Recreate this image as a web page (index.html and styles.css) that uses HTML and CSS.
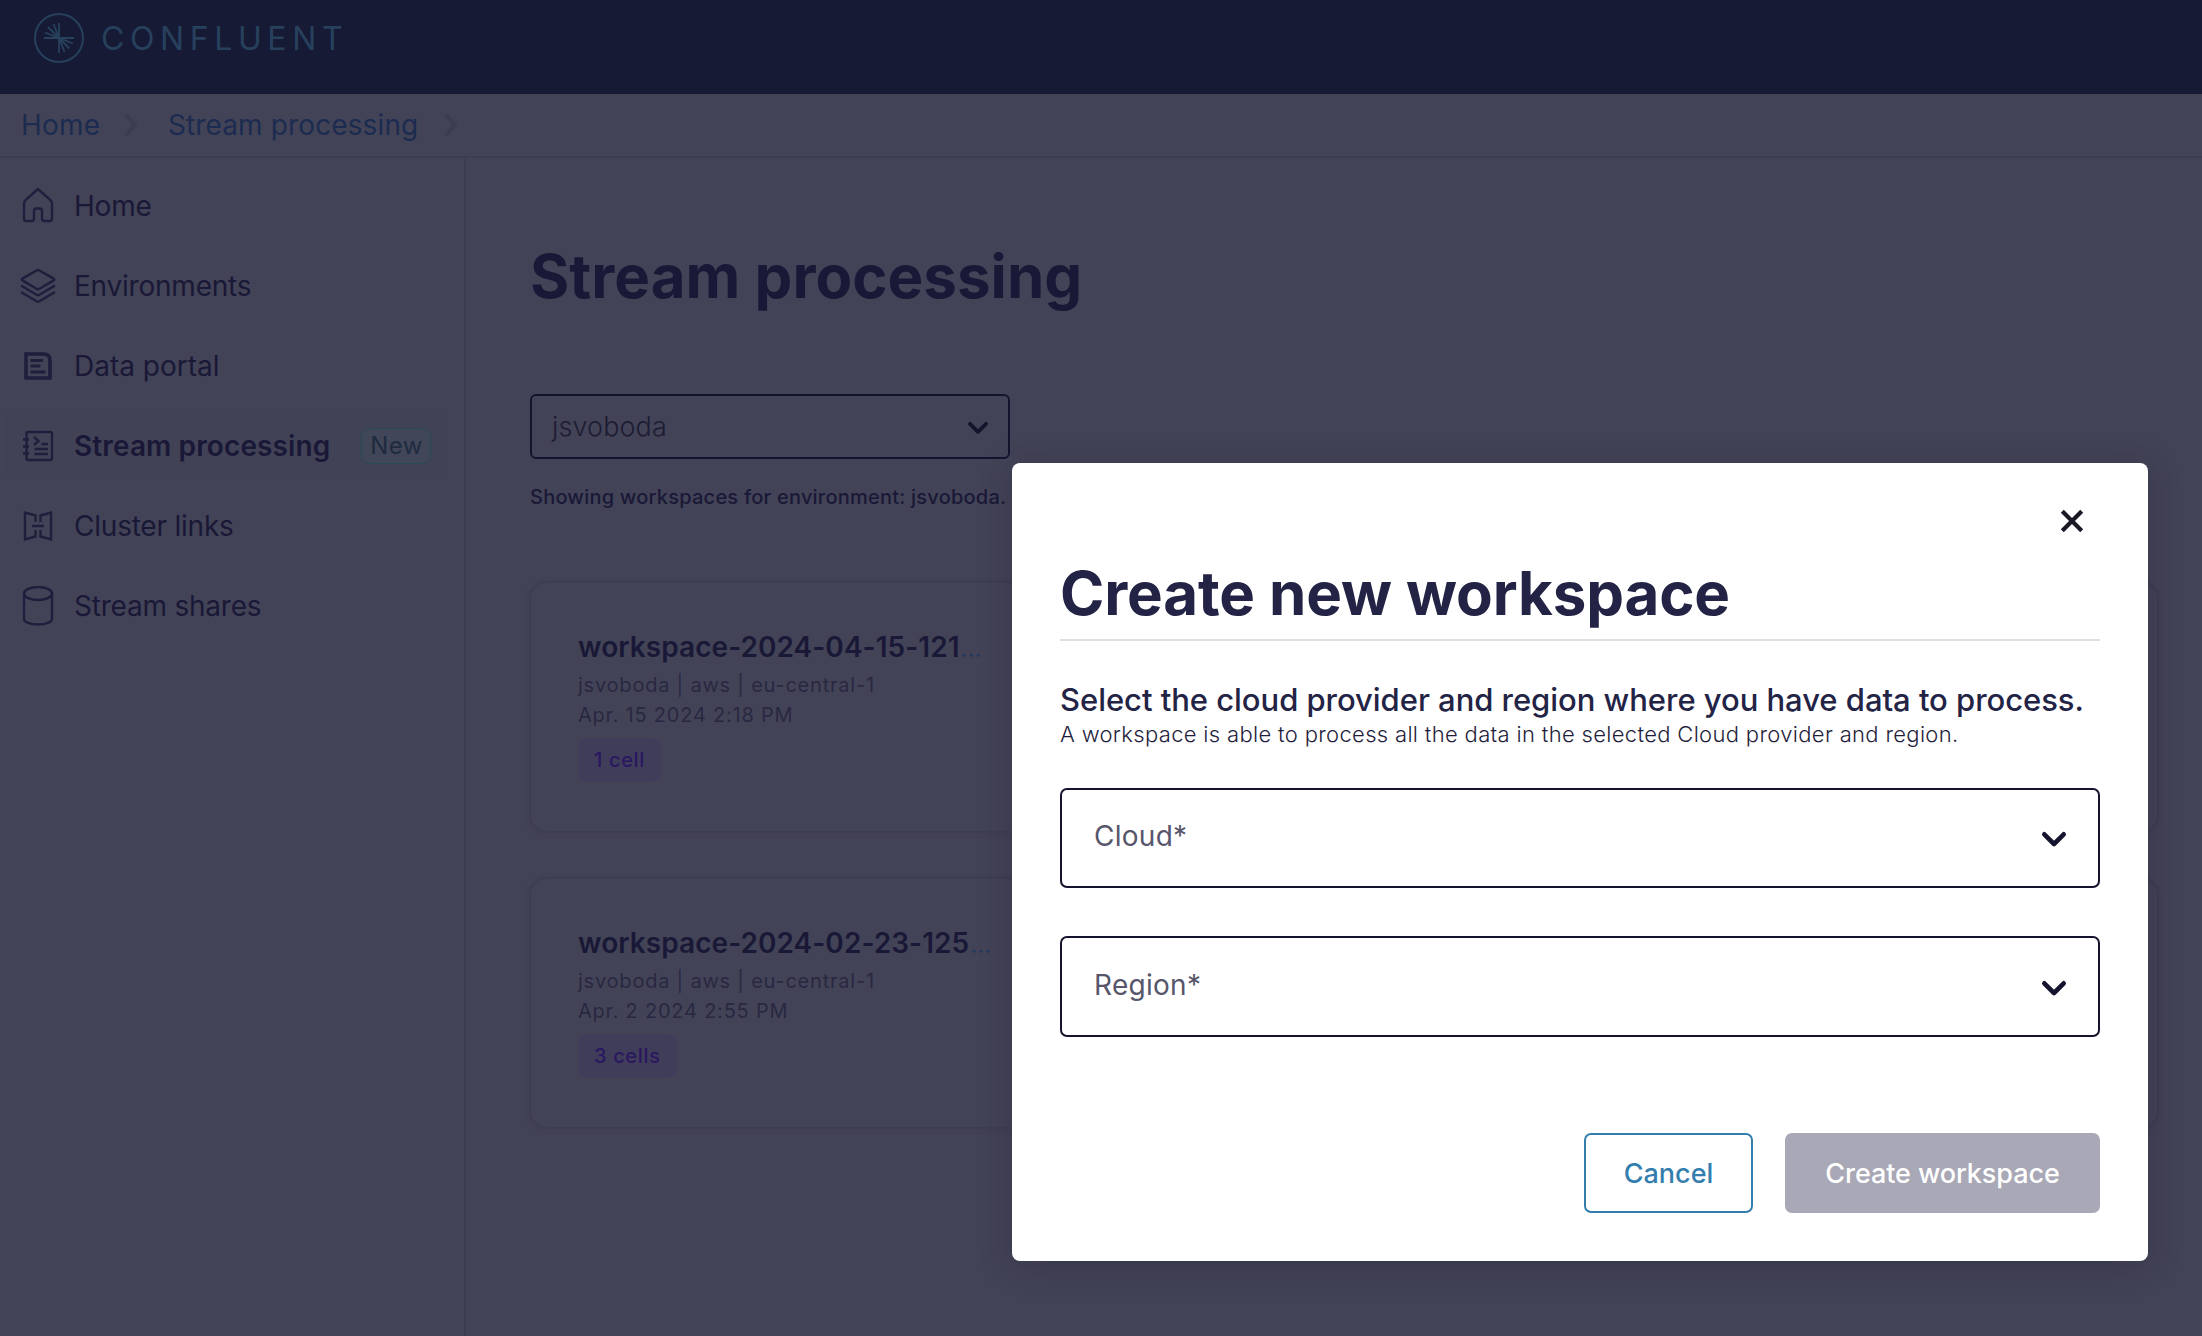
FILE: index.html
```html
<!DOCTYPE html>
<html lang="en">
<head>
<meta charset="utf-8">
<title>Stream processing</title>
<link rel="stylesheet" href="styles.css">
</head>
<body>
<header class="topbar">
  <svg class="logo" width="52" height="52" viewBox="0 0 52 52" fill="none" stroke="currentColor">
    <circle cx="26" cy="26" r="24" stroke-width="2"/>
    <path stroke-width="1.8" d="M26 11v30M11 26h30M26 26 20.5 12M26 26 15 15M26 26 12 20.5M26 26l5.5 14M26 26l10.500 10.500M26 26l14 5.500"/>
  </svg>
  <span class="wordmark">CONFLUENT</span>
</header>

<nav class="crumbs">
  <a class="crumb">Home</a>
  <svg class="crumb-sep" width="14" height="24" viewBox="0 0 14 24"><path d="M2 2l9 10-9 10"/></svg>
  <a class="crumb crumb-wide">Stream processing</a>
  <svg class="crumb-sep" width="14" height="24" viewBox="0 0 14 24"><path d="M2 2l9 10-9 10"/></svg>
</nav>

<div class="layout">
  <aside class="sidebar">
    <a class="nav-item home">
      <svg class="nav-icon" viewBox="0 0 36 40"><path d="M18 3 6 13.700q-2 1.800-2 4V32.500q0 2.500 2.500 2.500h5q2.500 0 2.500-2.500V25q0-2.500 2.500-2.500h3q2.500 0 2.500 2.500v7.500q0 2.500 2.500 2.500h5q2.500 0 2.500-2.500V17.700q0-2.200-2-4z"/></svg>
      <span>Home</span>
    </a>
    <a class="nav-item tight">
      <svg class="nav-icon" viewBox="0 0 36 40"><path d="M17 4.300 2.300 12.600q-1.200.9 0 1.800L17 23q1 .5 2 0l14.700-8.600q1.200-.9 0-1.800L19 4.300q-1-.5-2 0zM1 19.500 17 29q1 .5 2 0l16-9.500M1 26 17 35.500q1 .5 2 0L35 26"/></svg>
      <span>Environments</span>
    </a>
    <a class="nav-item">
      <svg class="nav-icon" viewBox="0 0 36 40"><path stroke-width="3.600" d="M6 8h17.500q6.500 0 6.500 6.500V32H6z"/><path stroke-width="2.800" d="M10.500 14.500h12.500M10.500 20h10M10.500 26h15"/></svg>
      <span>Data portal</span>
    </a>
    <a class="nav-item active">
      <svg class="nav-icon" viewBox="0 0 36 40"><rect x="6.500" y="6" width="25.500" height="28" rx="1.500"/><path d="M3 13.500h6M3 20.500h6M3 27.500h6M14 11l4.500 4-4.500 4M21.500 18H28M14.500 23H28M14.500 28H28"/></svg>
      <span>Stream processing</span>
      <em class="badge">New</em>
    </a>
    <a class="nav-item tight">
      <svg class="nav-icon" viewBox="0 0 36 40"><path d="M15.500 16V9.500L5 6.500v27l10.500-3V24M20.500 16V9.500L31 6.500v27l-10.500-3V24M12 20h12"/></svg>
      <span>Cluster links</span>
    </a>
    <a class="nav-item tight">
      <svg class="nav-icon" viewBox="0 0 36 40"><ellipse cx="18" cy="7.500" rx="14" ry="6.500"/><path d="M4 7.500V33c0 3 6 5.500 14 5.500S32 36 32 33V7.500"/></svg>
      <span>Stream shares</span>
    </a>
  </aside>

  <main class="content">
    <h1 class="page-title">Stream processing</h1>
    <div class="env-select">
      <span>jsvoboda</span>
      <svg width="22" height="14" viewBox="0 0 22 14"><path d="M3 2.800l8 8 8-8"/></svg>
    </div>
    <p class="caption">Showing workspaces for environment: jsvoboda.</p>
    <div class="cards">
      <article class="card">
        <h2 class="card-title">workspace-2024-04-15-121<span class="dots">...</span></h2>
        <p class="meta">jsvoboda | aws | eu-central-1</p>
        <p class="meta">Apr. 15 2024 2:18 PM</p>
        <span class="chip">1 cell</span>
      </article>
      <article class="card"></article>
      <article class="card"></article>
      <article class="card">
        <h2 class="card-title">workspace-2024-02-23-125<span class="dots">...</span></h2>
        <p class="meta">jsvoboda | aws | eu-central-1</p>
        <p class="meta">Apr. 2 2024 2:55 PM</p>
        <span class="chip">3 cells</span>
      </article>
      <article class="card"></article>
      <article class="card"></article>
    </div>
  </main>
</div>

<section class="modal">
  <div class="modal-top">
    <svg width="24" height="24" viewBox="0 0 24 24"><path d="M2.300 2.300l19.400 19.400M21.700 2.300L2.300 21.700"/></svg>
  </div>
  <h2 class="modal-title">Create new workspace</h2>
  <p class="lead">Select the cloud provider and region where you have data to process.</p>
  <p class="hint">A workspace is able to process all the data in the selected Cloud provider and region.</p>
  <div class="field">
    <span>Cloud*</span>
    <svg width="26" height="17" viewBox="0 0 26 17"><path d="M3.300 3.300l9.700 9.700 9.700-9.700"/></svg>
  </div>
  <div class="field field-region">
    <span>Region*</span>
    <svg width="26" height="17" viewBox="0 0 26 17"><path d="M3.300 3.300l9.700 9.700 9.700-9.700"/></svg>
  </div>
  <div class="actions">
    <button class="btn btn-cancel">Cancel</button>
    <button class="btn btn-create">Create workspace</button>
  </div>
</section>
</body>
</html>
```
FILE: styles.css
```css
* { box-sizing: border-box; margin: 0; padding: 0; }

body {
  width: 2202px;
  height: 1336px;
  overflow: hidden;
  position: relative;
  background: #434357;
  color: #191836;
  font-family: Inter, "Liberation Sans", sans-serif;
  font-size: 28px;
  line-height: 34px;
}

svg { flex: none; fill: none; }

.topbar {
  height: 94px;
  padding: 12px 0 0 33px;
  display: flex;
  align-items: flex-start;
  gap: 16px;
  background: #161a35;
  color: #27405c;
}
.wordmark {
  font-size: 32px;
  font-weight: 400;
  line-height: 53px;
  letter-spacing: 5.6px;
}

.crumbs {
  height: 64px;
  padding: 0 21px;
  display: flex;
  align-items: center;
  border-bottom: 2px solid #3d3d52;
  color: #1c2b50;
}
.crumb { width: 103px; letter-spacing: 0.2px; }
.crumb-wide { width: 276px; letter-spacing: 0.12px; }
.crumb-sep { stroke: #3b3b52; stroke-width: 4; }
.crumb + .crumb-sep { margin-right: 30px; }

.layout { display: flex; height: 1178px; }

.sidebar {
  width: 466px;
  padding: 16px 16px 0 3px;
  border-right: 2px solid #3d3d52;
  display: flex;
  flex-direction: column;
  gap: 16px;
}
.nav-item {
  height: 64px;
  padding-left: 17px;
  display: flex;
  align-items: center;
  gap: 18px;
  border-radius: 6px;
}
.home { letter-spacing: -0.2px; }
.tight { letter-spacing: -0.22px; }
.nav-icon { width: 36px; height: 40px; stroke: #1f1e3c; stroke-width: 2.4; }
.active { background: #424256; font-weight: 600; letter-spacing: 0.12px; }
.badge {
  width: 70px;
  height: 36px;
  margin-left: 13px;
  border: 1px solid #264c57;
  border-radius: 8px;
  background: #414658;
  color: #1e2b40;
  font-size: 24px;
  font-style: normal;
  font-weight: 400;
  letter-spacing: 0.4px;
  line-height: 33px;
  text-align: center;
}

.content { padding: 82px 0 0 64px; width: 1736px; }
.page-title { font-size: 60px; font-weight: 700; line-height: 73px; letter-spacing: 0.03px; }
.env-select {
  width: 480px;
  height: 65px;
  margin-top: 81px;
  padding: 0 19px 0 20px;
  display: flex;
  align-items: center;
  justify-content: space-between;
  border: 2px solid #15142f;
  border-radius: 6px;
  font-size: 27px;
  font-weight: 300;
  letter-spacing: 0.1px;
  color: #1d1c33;
}
.env-select svg { margin-top: 2px; stroke: #15142f; stroke-width: 3.8; stroke-linecap: round; stroke-linejoin: round; }
.caption { margin-top: 26px; font-size: 20px; font-weight: 500; line-height: 24px; letter-spacing: 0.22px; }

.cards {
  width: 1630px;
  margin-top: 72px;
  margin-left: -1px;
  display: grid;
  grid-template-columns: repeat(3, 1fr);
  grid-auto-rows: 252px;
  gap: 44px;
}
.card {
  padding: 46px 0 0 47px;
  border: 2px solid #3e3e52;
  border-radius: 18px;
  box-shadow: 0 2px 6px rgba(32, 30, 60, 0.08);
}
.card-title { font-size: 28px; font-weight: 600; line-height: 36px; letter-spacing: 0.05px; white-space: nowrap; }
.dots { margin-left: 1px; font-size: 25px; font-weight: 400; letter-spacing: -0.3px; color: #263b5c; }
.meta { font-size: 20px; line-height: 30px; color: #292842; letter-spacing: 0.78px; white-space: nowrap; }
.card-title + .meta { margin-top: 4px; }
.chip {
  display: inline-block;
  height: 44px;
  margin-top: 8px;
  padding: 0 16px;
  border-radius: 8px;
  background: #403d5a;
  color: #2a1760;
  font-size: 20px;
  font-weight: 500;
  line-height: 44px;
  letter-spacing: 0.65px;
}

.modal {
  position: absolute;
  left: 1012px;
  top: 463px;
  width: 1136px;
  height: 798px;
  padding: 46px 48px 48px;
  border-radius: 8px;
  background: #fff;
  color: #232345;
  box-shadow: 0 4px 32px rgba(30, 28, 50, 0.32);
}
.modal-top { height: 48px; padding-right: 16px; display: flex; justify-content: flex-end; }
.modal-top svg { stroke: #191926; stroke-width: 4.2; }
.modal-title {
  height: 84px;
  border-bottom: 2px solid #dedee4;
  font-size: 60px;
  font-weight: 700;
  line-height: 73px;
  letter-spacing: -0.12px;
}
.lead { margin-top: 40px; font-size: 31px; font-weight: 500; line-height: 38px; letter-spacing: -0.04px; white-space: nowrap; }
.hint { margin-top: 1px; font-size: 22px; font-weight: 300; line-height: 28px; letter-spacing: 0.325px; color: #1f1e3c; }
.field {
  height: 100px;
  margin-top: 40px;
  padding: 0 31px 0 32px;
  display: flex;
  align-items: center;
  justify-content: space-between;
  border: 2px solid #15142f;
  border-radius: 7px;
  color: #57566b;
  letter-spacing: 0.28px;
}
.field span { margin-top: -4px; }
.field svg { margin-top: 3px; stroke: #15142f; stroke-width: 4.6; stroke-linecap: round; stroke-linejoin: round; }
.field-region { height: 101px; margin-top: 48px; }
.actions { margin-top: 96px; display: flex; justify-content: flex-end; gap: 32px; }
.btn {
  height: 80px;
  border: 2px solid transparent;
  border-radius: 7px;
  font-family: inherit;
  font-size: 27px;
  font-weight: 500;
}
.btn-cancel { width: 169px; border-color: #337eae; background: #fff; color: #337eae; }
.btn-create { width: 315px; background: #a9a8b6; color: #fff; letter-spacing: -0.08px; }
```
